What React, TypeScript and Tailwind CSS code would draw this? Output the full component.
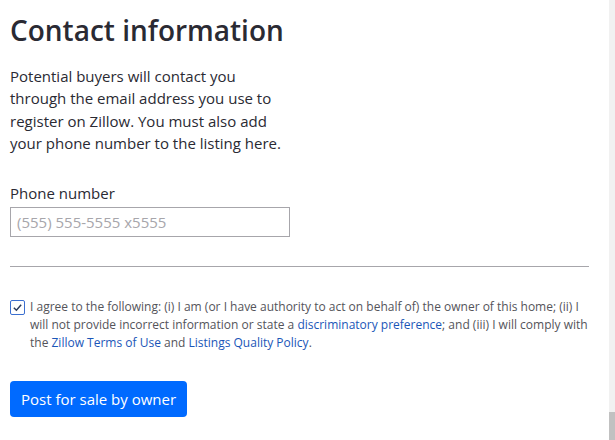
const font = { fontFamily: '"Open Sans", "Liberation Sans", sans-serif' };

const App = () => {
  return (
    <div className="flex h-[440px] w-[615px] overflow-hidden bg-white" style={font}>
      <div className="flex-1 pl-[10px] pr-[20px]">
        <h1 className="mt-[10px] text-[28px] font-semibold leading-[40px] text-[#2a2a33]">
          Contact information
        </h1>
        <p className="mt-[15px] max-w-[280px] text-[15px] leading-[22.3px] text-[#2a2a33]">
          Potential buyers will contact you through the email address you use to register on Zillow.
          You must also add your phone number to the listing here.
        </p>

        <label className="mt-[28px] block text-[15px] leading-[22px] text-[#2a2a33]">Phone number</label>
        <input
          className="mt-[3px] block h-[30px] w-[280px] border border-[#a7a6ab] px-[6px] text-[15px] text-[#2a2a33] outline-none placeholder:text-[#a7a6ab]"
          placeholder="(555) 555-5555 x5555"
        />

        <hr className="mt-[29px] border-t border-[#a7a6ab]" />

        <div className="mt-[31px] flex gap-[5px]">
          <span className="mt-[2px] flex h-[15px] w-[15px] shrink-0 items-center justify-center rounded-[2px] border border-[#3b6fd0] bg-white">
            <svg width="11" height="11" viewBox="0 0 12 12" fill="none">
              <path d="M2 6.3 4.8 9 10 3" stroke="#2a3a5a" strokeWidth="1.6" />
            </svg>
          </span>
          <p className="text-[12px] leading-[18px] text-[#54545a]">
            I agree to the following: (i) I am (or I have authority to act on behalf of) the owner of this
            home; (ii) I will not provide incorrect information or state a{' '}
            <a className="text-[#1a56b8]">discriminatory preference</a>; and (iii) I will comply with the{' '}
            <a className="text-[#1a56b8]">Zillow Terms of Use</a> and{' '}
            <a className="text-[#1a56b8]">Listings Quality Policy</a>.
          </p>
        </div>

        <button className="mt-[29px] h-[36px] rounded-[4px] bg-[#006aff] px-[11px] text-[15px] text-white">
          Post for sale by owner
        </button>
      </div>

      <div className="flex w-[6px] flex-col justify-end bg-[#f1f1f1]">
        <div className="h-[28px] bg-[#c1c1c1]" />
      </div>
    </div>
  );
};

export default App;
